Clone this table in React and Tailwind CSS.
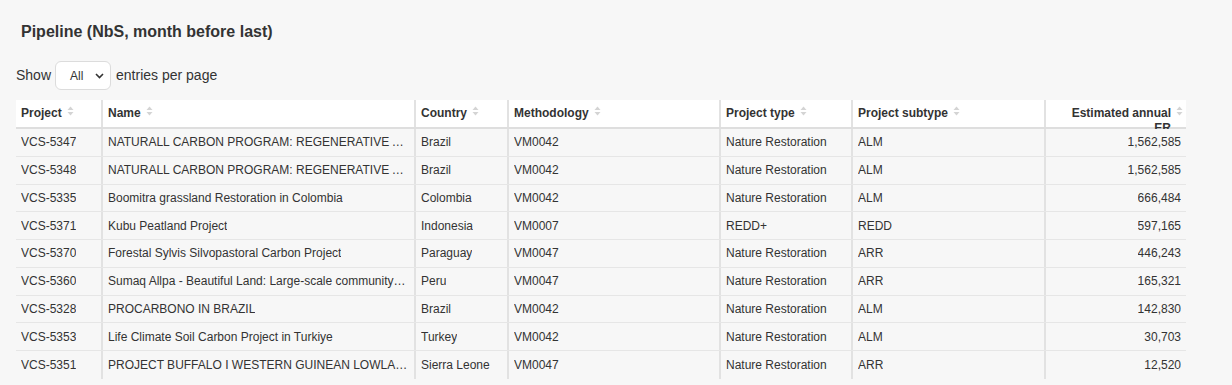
import React from "react";

const columns = [
  { key: "id", label: "Project", width: "w-[87px]" },
  { key: "name", label: "Name", width: "w-[313px]" },
  { key: "country", label: "Country", width: "w-[93px]" },
  { key: "method", label: "Methodology", width: "w-[212px]" },
  { key: "type", label: "Project type", width: "w-[132px]" },
  { key: "subtype", label: "Project subtype", width: "w-[193px]" },
  { key: "er", label: "Estimated annual ER", width: "w-[140px]", right: true },
];

const rows = [
  ["VCS-5347", "NATURALL CARBON PROGRAM: REGENERATIVE AGRICULTURE IN BRAZIL", "Brazil", "VM0042", "Nature Restoration", "ALM", "1,562,585"],
  ["VCS-5348", "NATURALL CARBON PROGRAM: REGENERATIVE AGRICULTURE IN BRAZIL II", "Brazil", "VM0042", "Nature Restoration", "ALM", "1,562,585"],
  ["VCS-5335", "Boomitra grassland Restoration in Colombia", "Colombia", "VM0042", "Nature Restoration", "ALM", "666,484"],
  ["VCS-5371", "Kubu Peatland Project", "Indonesia", "VM0007", "REDD+", "REDD", "597,165"],
  ["VCS-5370", "Forestal Sylvis Silvopastoral Carbon Project", "Paraguay", "VM0047", "Nature Restoration", "ARR", "446,243"],
  ["VCS-5360", "Sumaq Allpa - Beautiful Land: Large-scale community-based reforestation", "Peru", "VM0047", "Nature Restoration", "ARR", "165,321"],
  ["VCS-5328", "PROCARBONO IN BRAZIL", "Brazil", "VM0042", "Nature Restoration", "ALM", "142,830"],
  ["VCS-5353", "Life Climate Soil Carbon Project in Turkiye", "Turkey", "VM0042", "Nature Restoration", "ALM", "30,703"],
  ["VCS-5351", "PROJECT BUFFALO I WESTERN GUINEAN LOWLAND FORESTS", "Sierra Leone", "VM0047", "Nature Restoration", "ARR", "12,520"],
];

const SortIcon = () => (
  <svg width="7" height="10" viewBox="0 0 7 10" className="shrink-0 ml-[5px]">
    <path d="M3.5 0.5 L6.5 4 L0.5 4 Z" fill="#d4d4d4" />
    <path d="M3.5 9.5 L6.5 6 L0.5 6 Z" fill="#d4d4d4" />
  </svg>
);

const App = () => {
  const last = columns.length - 1;
  return (
    <div
      className="min-h-screen bg-[#f7f7f7] text-[#333] px-4 pt-[23px]"
      style={{ fontFamily: '"Liberation Sans", Arial, sans-serif' }}
    >
      <h2 className="pl-[5px] text-[16px] leading-[18px] font-bold text-[#333]">
        Pipeline (NbS, month before last)
      </h2>

      <div className="mt-[20px] flex items-center text-[14px]">
        <span>Show</span>
        <div className="ml-[4px] mr-[5px] flex h-[29px] w-[56px] items-center justify-between rounded-md border border-[#dcdcdc] bg-white pl-[14px] pr-[6px] text-[12px]">
          <span>All</span>
          <svg width="9" height="6" viewBox="0 0 9 6">
            <path d="M1 1 L4.5 4.5 L8 1" fill="none" stroke="#333" strokeWidth="1.6" />
          </svg>
        </div>
        <span>entries per page</span>
      </div>

      <div className="mt-[10px] w-[1170px] text-[12px]">
        <div className="flex h-[29px] bg-white border-b-2 border-[#dedede]">
          {columns.map((c, i) => (
            <div
              key={c.key}
              className={`${c.width} h-[27px] ${i < last ? "border-r-2 border-[#e2e2e2]" : ""}`}
            >
              <div
                className={`flex items-start pt-[6px] px-[5px] font-bold leading-[15px] ${c.right ? "justify-end pr-[3px] h-[29px] overflow-hidden" : ""}`}
              >
                <span className={c.right ? "text-right w-[100px]" : ""}>{c.label}</span>
                <SortIcon />
              </div>
            </div>
          ))}
        </div>
        {rows.map((r, ri) => (
          <div
            key={r[0]}
            className={`flex h-[27.75px] ${ri < rows.length - 1 ? "border-b border-[#e6e6e6]" : ""}`}
          >
            {r.map((v, i) => (
              <div
                key={i}
                className={`${columns[i].width} flex items-center px-[5px] overflow-hidden ${i < last ? "border-r-2 border-[#e2e2e2]" : ""} ${columns[i].right ? "justify-end" : ""}`}
              >
                <span className="truncate">{v}</span>
              </div>
            ))}
          </div>
        ))}
      </div>
    </div>
  );
};

export default App;
